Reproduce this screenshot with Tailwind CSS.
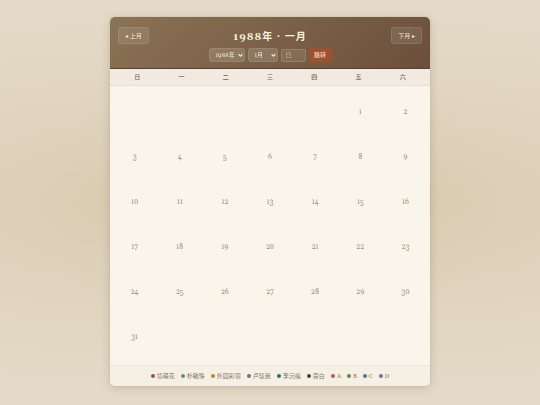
<!DOCTYPE html>
<html lang="zh-CN">
<head>
<meta charset="utf-8">
<meta name="viewport" content="width=device-width, initial-scale=1">
<title>1988年 · 一月</title>
<script src="https://cdn.jsdelivr.net/npm/@tailwindcss/browser@4"></script>
</head>
<body class="flex min-h-screen items-center justify-center bg-[#e4dac7] bg-[radial-gradient(ellipse_at_20%_50%,#b4966430_0%,transparent_65%),radial-gradient(ellipse_at_80%_50%,#b4966430_0%,transparent_65%)] px-4 pt-4 pb-[18px] font-[Georgia,Gelasio,'Noto_Sans_CJK_SC',serif] antialiased">
<main class="w-full max-w-80 overflow-hidden rounded-[5px] bg-[#faf5eb] shadow-[0_2px_10px_#503c1e30,0_0_1px_#8b735580]">
  <header class="border-b border-[#5c4033] bg-linear-135 from-[#8b7355] to-[#6b4f3c] px-2 pt-2 pb-1.5 text-[#faf0dc]">
    <div class="flex items-start justify-between">
      <button type="button" class="mt-0.5 h-[17px] w-[31px] rounded-[3px] border border-white/10 bg-white/10 text-[6px] leading-3 whitespace-nowrap opacity-95">◂ 上月</button>
      <h1 class="pt-0.5 text-[10px] leading-5 font-bold tracking-[1px]">1988年 · 一月</h1>
      <button type="button" class="mt-0.5 h-[17px] w-[31px] rounded-[3px] border border-white/10 bg-white/10 text-[6px] leading-3 whitespace-nowrap opacity-95">下月 ▸</button>
    </div>
    <form class="mt-px flex items-center justify-center gap-[3px] text-[6px] opacity-95">
      <div class="relative">
        <select aria-label="年" class="block h-[14px] w-9 appearance-none rounded-[3px] border border-white/10 bg-white/15 pl-[6px] leading-3"><option>1988年</option></select>
        <svg class="pointer-events-none absolute top-[5px] right-[2px] size-[5px]" viewBox="0 0 8 8" fill="none" stroke="currentColor" stroke-width="2"><path d="M1 2l3 3 3-3"/></svg>
      </div>
      <div class="relative">
        <select aria-label="月" class="block h-[14px] w-[30px] appearance-none rounded-[3px] border border-white/10 bg-white/15 pl-[6px] leading-3"><option>1月</option></select>
        <svg class="pointer-events-none absolute top-[5px] right-[2px] size-[5px]" viewBox="0 0 8 8" fill="none" stroke="currentColor" stroke-width="2"><path d="M1 2l3 3 3-3"/></svg>
      </div>
      <input aria-label="日" placeholder="日" class="h-[13px] w-[25px] rounded-[2px] border border-white/15 bg-white/10 px-1 leading-3 placeholder:text-[#c8baa2]">
      <button type="button" class="h-[14px] w-[23px] rounded-[3px] bg-[#a0522d] leading-3">跳转</button>
    </form>
  </header>
  <div class="grid grid-cols-7 border-b border-[#e8dfcf] bg-[#f0eae0] px-[5px] py-0.5 text-center text-[6px] leading-3 font-medium text-[#78624e]">
    <span>日</span><span>一</span><span>二</span><span>三</span><span>四</span><span>五</span><span>六</span>
  </div>
  <div id="days" class="grid auto-rows-[45px] grid-cols-7 items-center px-[2px] pt-[4px] pb-[5px] text-center text-[7px] text-[#9f8b78]"></div>
  <footer class="border-t border-[#eee7da] bg-[#f5f0e4] px-2 pt-1 pb-1">
    <ul class="flex items-center justify-center gap-[6px] text-[6px] leading-3 whitespace-nowrap text-[#8b7765]">
      <li class="flex items-center gap-[2px]"><i class="size-1 rounded-full bg-[#b04a42]"></i>境萌花</li>
      <li class="flex items-center gap-[2px]"><i class="size-1 rounded-full bg-[#5a8f7b]"></i>朴敏珠</li>
      <li class="flex items-center gap-[2px]"><i class="size-1 rounded-full bg-[#b8862b]"></i>外园彩羽</li>
      <li class="flex items-center gap-[2px]"><i class="size-1 rounded-full bg-[#7b6b8a]"></i>卢珑我</li>
      <li class="flex items-center gap-[2px]"><i class="size-1 rounded-full bg-[#2e6b80]"></i>李沅禧</li>
      <li class="flex items-center gap-[2px]"><i class="size-1 rounded-full bg-[#444444]"></i>旁白</li>
      <li class="flex items-center gap-[2px]"><i class="size-1 rounded-full bg-[#a06068]"></i>A</li>
      <li class="flex items-center gap-[2px]"><i class="size-1 rounded-full bg-[#6b8045]"></i>B</li>
      <li class="flex items-center gap-[2px]"><i class="size-1 rounded-full bg-[#54708f]"></i>C</li>
      <li class="flex items-center gap-[2px]"><i class="size-1 rounded-full bg-[#8a6090]"></i>D</li>
    </ul>
  </footer>
</main>
<script>
// Friday is the first of the month: five empty cells come before it.
const days = document.getElementById('days');
for (let day = -4; day <= 37; day++) {
  const cell = document.createElement('span');
  if (day >= 1 && day <= 31) cell.textContent = day;
  days.append(cell);
}
</script>
</body>
</html>
